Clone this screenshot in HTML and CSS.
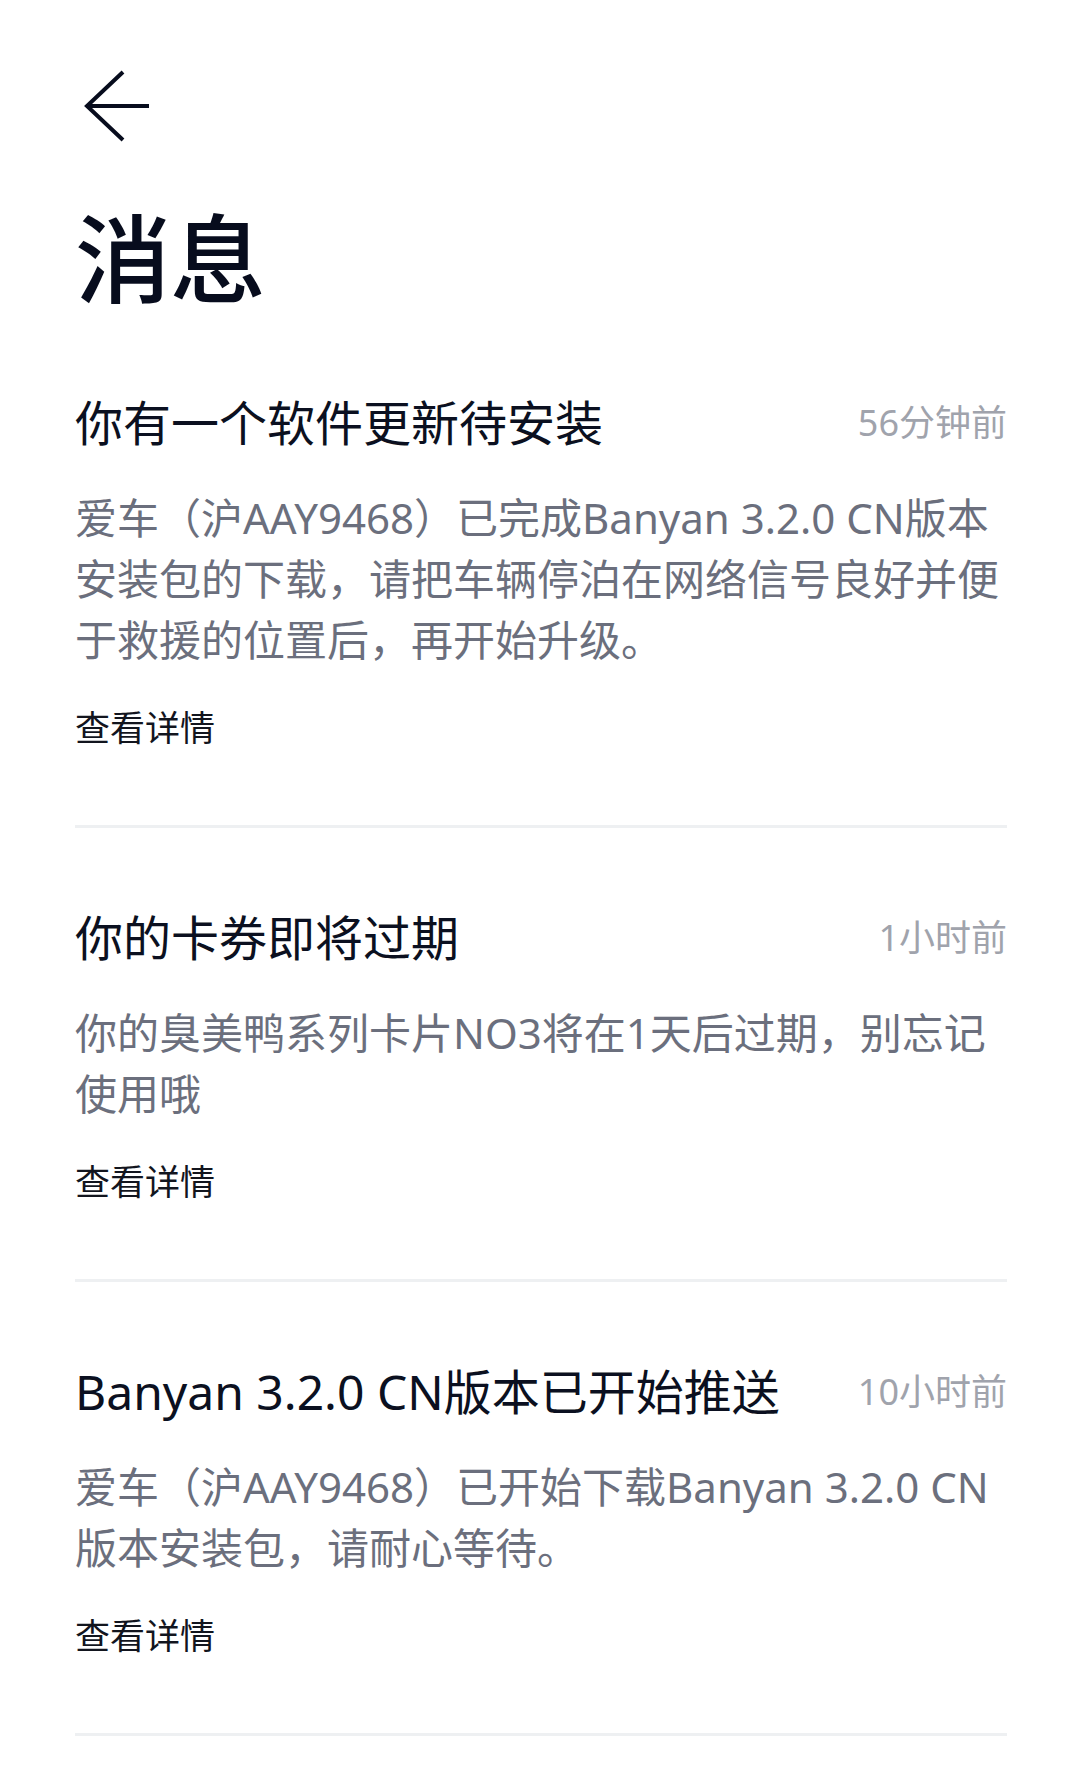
FILE: index.html
```html
<!DOCTYPE html>
<html lang="zh-CN">
<head>
<meta charset="utf-8">
<title>消息</title>
<link rel="stylesheet" href="styles.css">
</head>
<body>
<div class="page">
  <header class="topbar">
    <button class="back" aria-label="返回">
      <svg class="back-icon" viewBox="0 0 72 72" width="72" height="72">
        <path d="M41 2 L5 36 L41 70 M5 36 H67" fill="none" stroke="#070c1d" stroke-width="4" stroke-linejoin="miter"/>
      </svg>
    </button>
  </header>
  <h1 class="page-title">消息</h1>

  <ul class="msg-list">
    <li class="msg">
      <div class="msg-head">
        <h2 class="msg-title">你有一个软件更新待安装</h2>
        <span class="msg-time">56分钟前</span>
      </div>
      <p class="msg-body">爱车（沪AAY9468）已完成Banyan 3.2.0 CN版本安装包的下载，请把车辆停泊在网络信号良好并便于救援的位置后，再开始升级。</p>
      <a class="msg-link">查看详情</a>
    </li>
    <li class="msg">
      <div class="msg-head">
        <h2 class="msg-title">你的卡券即将过期</h2>
        <span class="msg-time">1小时前</span>
      </div>
      <p class="msg-body">你的臭美鸭系列卡片NO3将在1天后过期，别忘记使用哦</p>
      <a class="msg-link">查看详情</a>
    </li>
    <li class="msg">
      <div class="msg-head">
        <h2 class="msg-title">Banyan 3.2.0 CN版本已开始推送</h2>
        <span class="msg-time">10小时前</span>
      </div>
      <p class="msg-body">爱车（沪AAY9468）已开始下载Banyan 3.2.0 CN版本安装包，请耐心等待。</p>
      <a class="msg-link">查看详情</a>
    </li>
  </ul>
</div>
</body>
</html>
```

FILE: styles.css
```css
* {
  box-sizing: border-box;
}

html, body {
  margin: 0;
  padding: 0;
  background: #ffffff;
}

body {
  font-family: "Noto Sans", "Noto Sans CJK SC", sans-serif;
  color: #0b1020;
  width: 1080px;
  min-height: 1773px;
}

.page {
  padding: 70px 73px 0 75px;
}

.topbar {
  height: 72px;
  display: flex;
  align-items: center;
}

.back {
  margin: 0 0 0 7px;
  padding: 0;
  border: 0;
  background: none;
  width: 72px;
  height: 72px;
  display: block;
}

.back-icon {
  display: block;
}

.page-title {
  margin: 61px 0 0 0;
  font-size: 96px;
  line-height: 110px;
  font-weight: 500;
  color: #070c1d;
  letter-spacing: -1px;
}

.msg-list {
  list-style: none;
  margin: 0;
  padding: 0;
}

.msg {
  padding: 80px 0 72px;
  border-bottom: 3px solid #eef0f2;
  display: flex;
  flex-direction: column;
  align-items: flex-start;
}

.msg-head {
  width: 100%;
  display: flex;
  justify-content: space-between;
  align-items: center;
  height: 60px;
}

.msg-title {
  margin: 0;
  font-size: 48px;
  line-height: 60px;
  font-weight: 400;
  color: #0b1020;
  white-space: nowrap;
}

.msg-time {
  font-size: 36px;
  line-height: 60px;
  color: #a0a3ac;
  white-space: nowrap;
}

.msg-body {
  margin: 34px 0 0 0;
  font-size: 42px;
  line-height: 61px;
  color: #6b6f7d;
  width: 100%;
}

.msg-link {
  margin-top: 33px;
  font-size: 35px;
  line-height: 50px;
  color: #12151e;
  text-decoration: none;
}
```
